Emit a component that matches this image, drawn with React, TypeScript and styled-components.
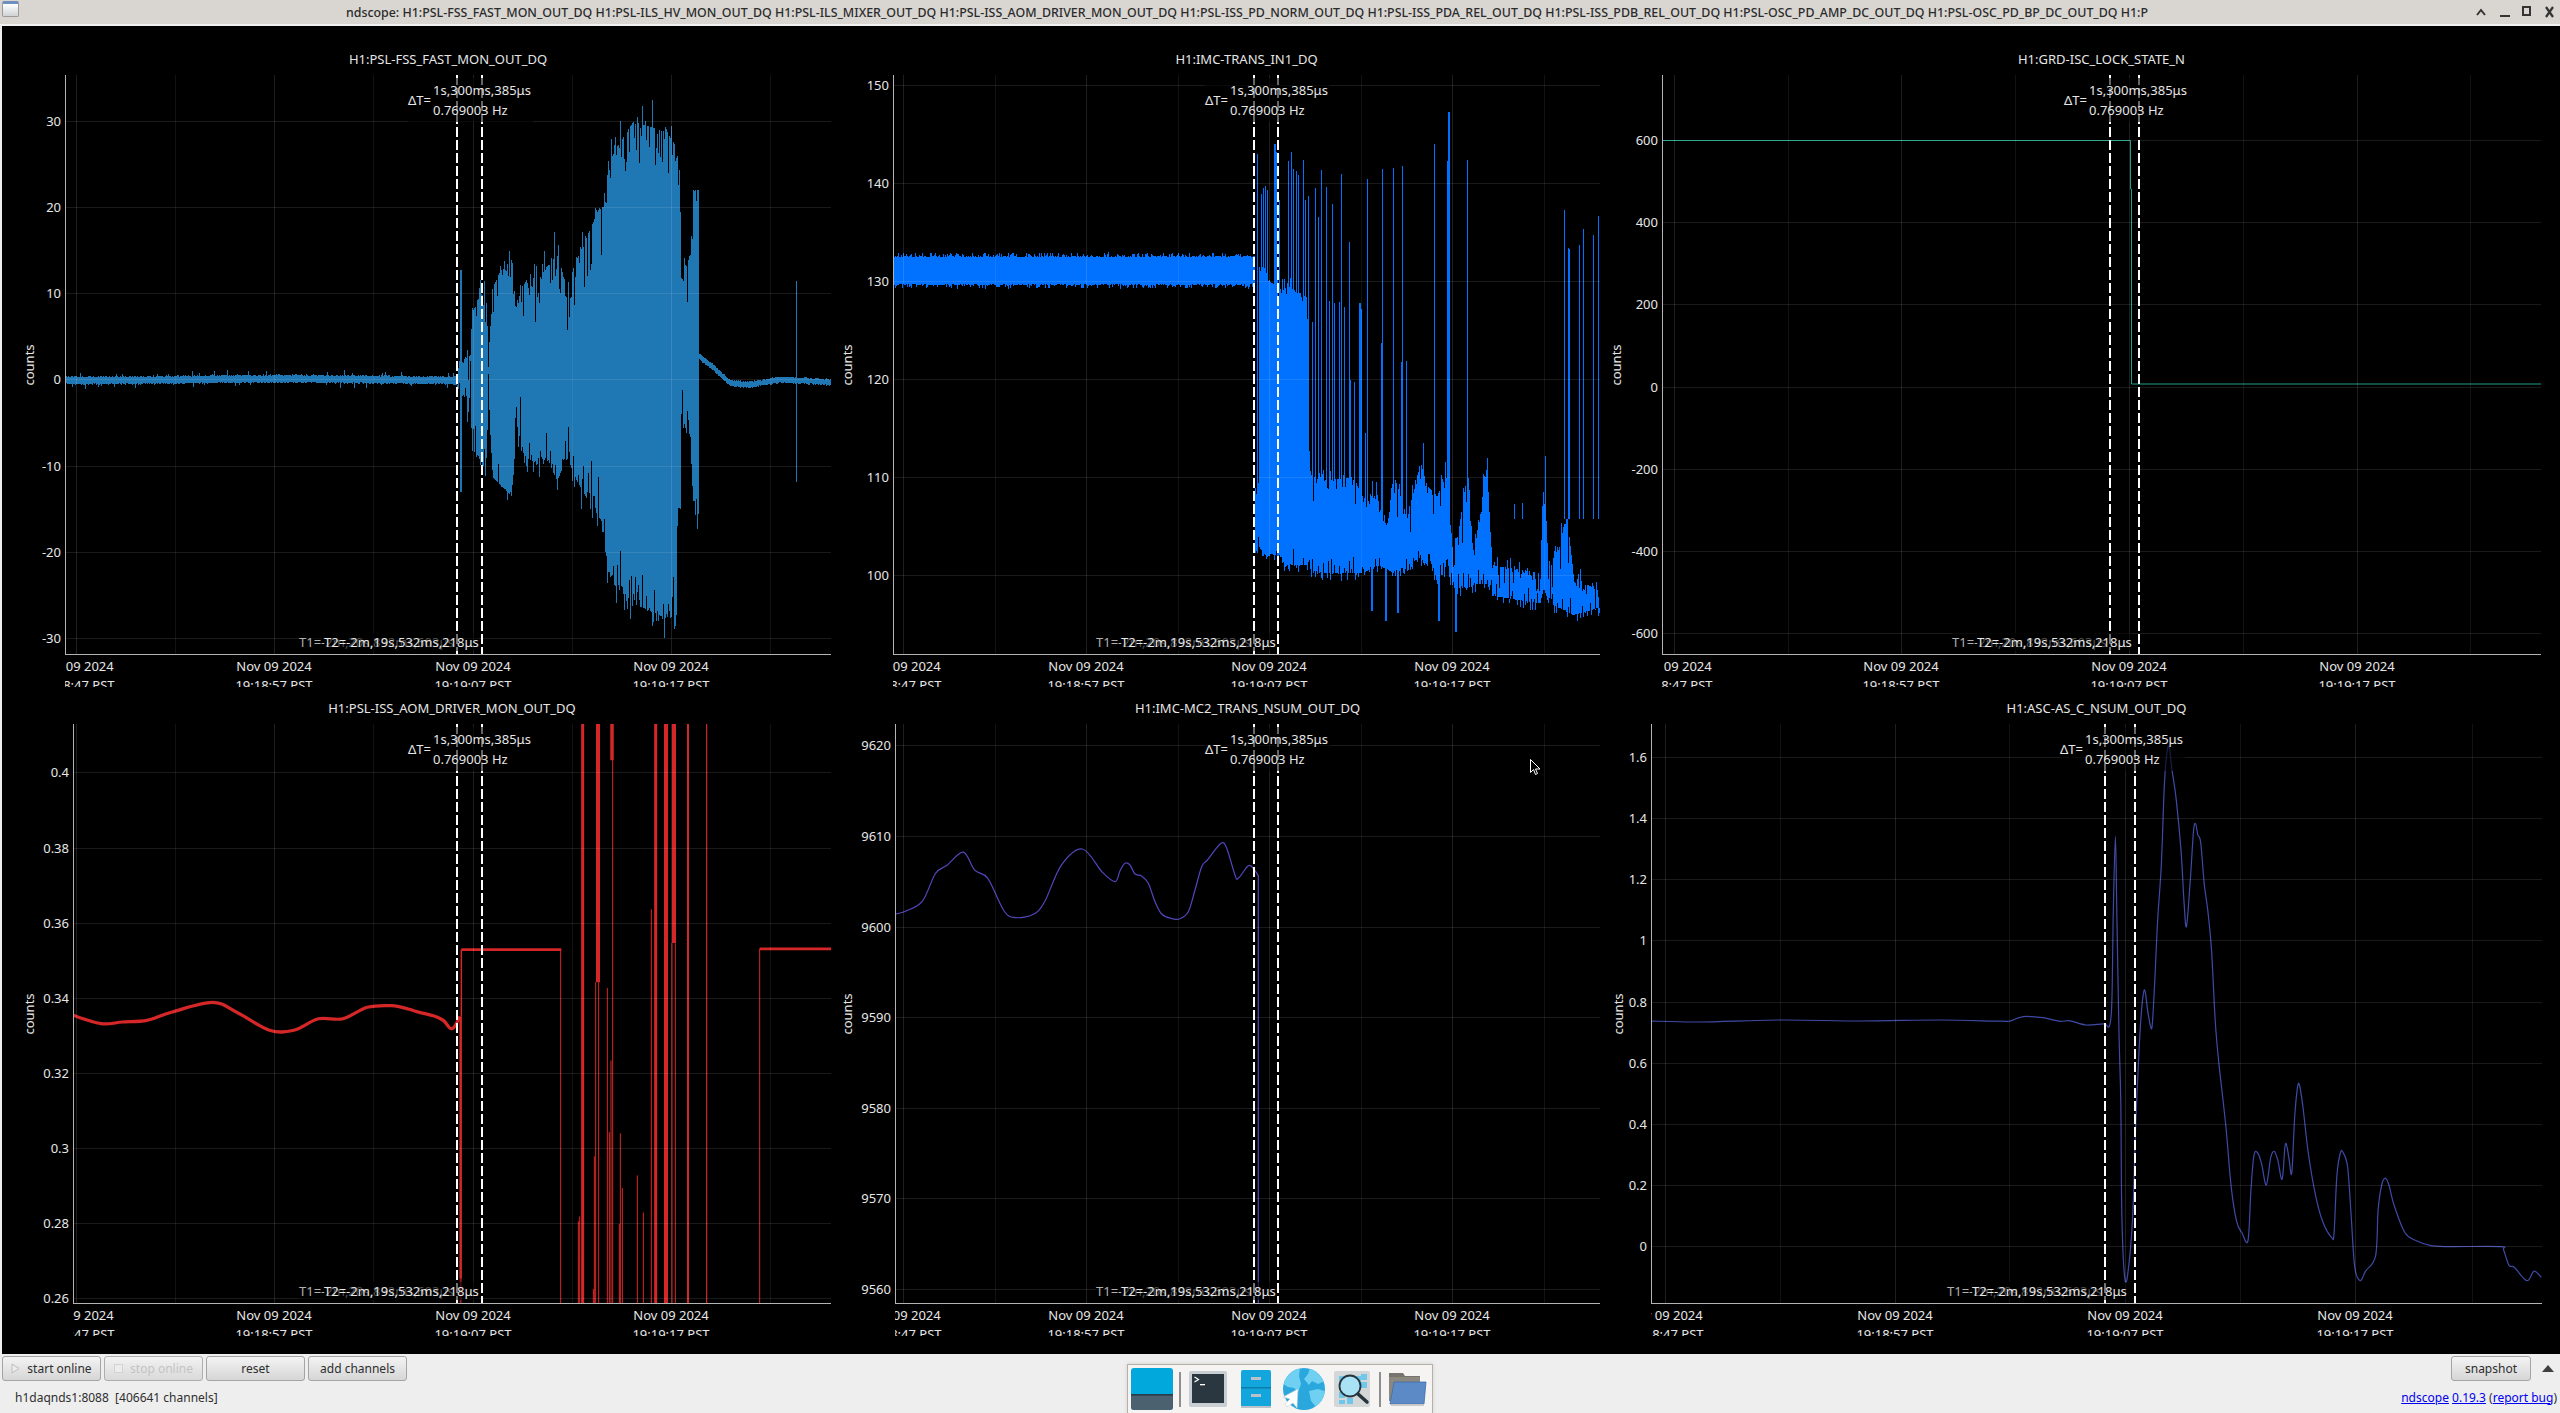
import React, { FC, ReactNode } from "react";
import styled, { createGlobalStyle } from "styled-components";

const GlobalStyle = createGlobalStyle`
  html, body {
    margin: 0;
    padding: 0;
    background: #eeeeee;
    overflow: hidden;
  }
`;

const COL_STARTS = [2, 834, 1604];
const WINDOW_TITLE =
    "ndscope: H1:PSL-FSS_FAST_MON_OUT_DQ H1:PSL-ILS_HV_MON_OUT_DQ H1:PSL-ILS_MIXER_OUT_DQ H1:PSL-ISS_AOM_DRIVER_MON_OUT_DQ H1:PSL-ISS_PD_NORM_OUT_DQ H1:PSL-ISS_PDA_REL_OUT_DQ H1:PSL-ISS_PDB_REL_OUT_DQ H1:PSL-OSC_PD_AMP_DC_OUT_DQ H1:PSL-OSC_PD_BP_DC_OUT_DQ H1:P";

const Page = styled.div`
  width: 2560px;
  height: 1413px;
  display: flex;
  flex-direction: column;
  position: relative;
  overflow: hidden;
  font-family: "Noto Sans", sans-serif;
  background: #eeeeee;
`;

const TitleBar = styled.div`
  height: 24px;
  flex: none;
  position: relative;
  display: flex;
  align-items: center;
  justify-content: center;
  padding-right: 66px;
  background: #d9d6d2;
  border-bottom: 2px solid #f2f2f2;
`;

const TitleText = styled.div`
  font-size: 12.4px;
  font-weight: 500;
  color: #2b2b2b;
  white-space: nowrap;
`;

const WindowIcon = styled.div`
  position: absolute;
  left: 2px;
  top: 1px;
  width: 17px;
  height: 16px;
  border: 1px solid #9a9a9a;
  border-top: 3px solid #6f8fbd;
  border-radius: 2px;
  background: linear-gradient(#ffffff, #cfd2d4);
  box-sizing: border-box;
`;

const WindowControls = styled.svg`
  position: absolute;
  left: 2470px;
  top: 4px;
`;

const PlotGrid = styled.div`
  height: 1328px;
  margin-left: 2px;
  flex: none;
  display: grid;
  grid-template-columns: 832px 770px 956px;
  grid-template-rows: 664px 664px;
  background: #000000;
`;

const Panel = styled.div<{ $gutter: number; $width: number; $head: number; $foot: number }>`
  display: grid;
  grid-template-columns: ${(p) => p.$gutter}px ${(p) => p.$width}px;
  grid-template-rows: ${(p) => p.$head}px 580px ${(p) => p.$foot}px;
  color: #e6e6e6;
  font-size: 13px;
`;

const PlotTitle = styled.div`
  grid-column: 2;
  align-self: end;
  text-align: center;
  line-height: 20px;
  padding-bottom: 6px;
  white-space: nowrap;
`;

const Gutter = styled.div`
  grid-column: 1;
  grid-row: 2;
  position: relative;
`;

const CountsLabel = styled.div<{ $offset: number }>`
  position: absolute;
  right: ${(p) => p.$offset}px;
  top: 50%;
  transform: translate(50%, -50%) rotate(-90deg);
  line-height: 16px;
`;

const YTick = styled.div`
  position: absolute;
  right: 4px;
  line-height: 18px;
  transform: translateY(-50%);
  white-space: nowrap;
`;

const Canvas = styled.div`
  grid-column: 2;
  grid-row: 2;
  position: relative;
  border-left: 1px solid #b4b4b4;
  border-bottom: 1px solid #b4b4b4;
  box-sizing: border-box;
  overflow: hidden;
`;

const PlotSvg = styled.svg`
  display: block;
  position: absolute;
  left: -1px;
  top: 0;
`;

const DeltaLabel = styled.div`
  position: absolute;
  top: 3px;
  display: flex;
  align-items: center;
  gap: 2px;
  background: rgba(0, 0, 0, 0.6);
  padding-right: 2px;
  height: 44px;
  white-space: nowrap;
`;

const DeltaValues = styled.div`
  display: flex;
  flex-direction: column;
  line-height: 20px;
`;

const TimeLabel = styled.div<{ $dim?: boolean }>`
  position: absolute;
  bottom: 3px;
  line-height: 18px;
  height: 18px;
  white-space: nowrap;
  background: rgba(0, 0, 0, 0.55);
  color: ${(p) => (p.$dim ? "#b0b0b0" : "#e6e6e6")};
`;

const XAxis = styled.div`
  grid-column: 2;
  grid-row: 3;
  position: relative;
  height: 32px;
  overflow: hidden;
`;

const XTick = styled.div`
  position: absolute;
  top: 2px;
  transform: translateX(-50%);
  text-align: center;
  line-height: 19px;
  white-space: nowrap;
`;

const Footer = styled.div`
  flex: 1;
  display: flex;
  flex-direction: column;
  background: #eeeeee;
  padding: 2px 2px 0;
`;

const ButtonRow = styled.div`
  display: flex;
  align-items: center;
  gap: 3px;
  height: 25px;
`;

const ToolButton = styled.div<{ $disabled?: boolean; $width?: number }>`
  width: ${(p) => p.$width ?? 99}px;
  height: 25px;
  box-sizing: border-box;
  display: flex;
  align-items: center;
  justify-content: center;
  gap: 7px;
  border: 1px solid #a4a4a4;
  border-radius: 3px;
  background: linear-gradient(#f3f3f3, #d6d6d6);
  font-size: 12px;
  color: ${(p) => (p.$disabled ? "#bcbcbc" : "#2e2e2e")};
  opacity: ${(p) => (p.$disabled ? 0.85 : 1)};
`;

const Spacer = styled.div`
  flex: 1;
`;

const ArrowButton = styled.div`
  width: 0;
  height: 0;
  margin: 0 4px 0 8px;
  border-left: 6px solid transparent;
  border-right: 6px solid transparent;
  border-bottom: 7px solid #404040;
`;

const StatusRow = styled.div`
  display: flex;
  justify-content: space-between;
  align-items: center;
  height: 32px;
  padding: 0 1px 0 13px;
  font-size: 12px;
  color: #2e2e2e;
  white-space: pre;
`;

const Link = styled.span`
  color: #0000ee;
  text-decoration: underline;
`;

const Dock = styled.div`
  position: absolute;
  left: 1127px;
  top: 1364px;
  width: 306px;
  height: 49px;
  box-sizing: border-box;
  border: 1px solid #b6b0a6;
  border-bottom: none;
  background: #f5f4f2;
  box-shadow: 0 0 4px rgba(0, 0, 0, 0.12);
`;

const MouseCursor = styled.svg`
  position: absolute;
  left: 1530px;
  top: 759px;
`;

/* seeded so the noise stays the same between runs */
const makeRandom = (seed: number) => () => {
    seed = (seed + 0x6d2b79f5) | 0;
    let t = Math.imul(seed ^ (seed >>> 15), 1 | seed);
    t = (t + Math.imul(t ^ (t >>> 7), 61 | t)) ^ t;
    return ((t ^ (t >>> 14)) >>> 0) / 4294967296;
};

type Env = number[][];

const interp = (pts: Env, x: number, idx: number) => {
    if (x <= pts[0][0]) return pts[0][idx];
    for (let i = 1; i < pts.length; i++) {
        if (x <= pts[i][0]) {
            const t = (x - pts[i - 1][0]) / (pts[i][0] - pts[i - 1][0]);
            return pts[i - 1][idx] + t * (pts[i][idx] - pts[i - 1][idx]);
        }
    }
    return pts[pts.length - 1][idx];
};

const vline = (x: number, a: number, b: number) => `M${x + 0.5} ${a.toFixed(1)}V${b.toFixed(1)}`;

const buildFastMon = () => {
    const rnd = makeRandom(11);
    const mapPts = (p: number[]) => [400 + p[0] / 3, 60 + p[1] / 2.613, 60 + p[2] / 2.613];
    const burst: Env = [
        [170, 810, 855], [188, 785, 880], [210, 770, 880], [214, 650, 1020], [245, 610, 1050], [256, 600, 1090],
        [265, 770, 870], [275, 600, 1090], [300, 550, 1110], [335, 520, 1140], [345, 640, 1000], [380, 570, 1040],
        [400, 570, 1050], [440, 540, 1040], [470, 510, 1100], [500, 590, 1040], [530, 520, 1100], [555, 470, 1140],
        [600, 380, 1200], [616, 370, 1260], [620, 300, 1330], [640, 240, 1370], [700, 160, 1420], [800, 190, 1460],
        [830, 230, 1450], [833, 320, 1170], [840, 330, 1170], [841, 560, 920], [870, 510, 1000], [878, 340, 1150],
        [896, 340, 1190],
    ].map(mapPts);
    const tail: Env = [
        [897, 775, 0], [940, 805, 0], [990, 845, 0], [1050, 848, 0], [1140, 835, 0], [1293, 842, 0],
    ].map(mapPts);
    let d = "";
    for (let x = 65; x < 831; x++) {
        if (x < 457) {
            const c = 379.5 + Math.sin(x / 60) * 0.8;
            const spike = rnd() < 0.08 ? rnd() * 5 : 0;
            d += vline(x, c - 3 - rnd() * 1.5 - spike, c + 3 + rnd() * 1.5 + (rnd() < 0.06 ? rnd() * 5 : 0));
        } else if (x < 699) {
            const spikeTop = rnd() < 0.35 ? rnd() * rnd() * 34 : 0;
            const cutTop = rnd() < 0.5 ? rnd() * rnd() * 55 : 0;
            const spikeBot = rnd() < 0.35 ? rnd() * rnd() * 30 : 0;
            const cutBot = rnd() < 0.5 ? rnd() * rnd() * 55 : 0;
            d += vline(x, interp(burst, x, 1) - spikeTop + cutTop, interp(burst, x, 2) + spikeBot - cutBot);
        } else {
            const c = interp(tail, x, 1);
            d += vline(x, c - 2.2 - rnd() * 1.5, c + 2.2 + rnd() * 1.5);
        }
    }
    d += vline(460, 270, 492) + vline(461, 270, 492);
    d += vline(796, 281, 482);
    return d;
};

const buildImcTrans = () => {
    const rnd = makeRandom(23);
    const X = (v: number) => 1220 + v / 3;
    const Y = (v: number) => 60 + v / 2.613;
    const base: Env = [
        [105, 1120, 1270], [114, 1120, 1270], [115, 540, 1270], [130, 540, 1290], [145, 560, 1300], [150, 580, 1290],
        [185, 600, 1300], [192, 600, 1320], [200, 590, 1320], [260, 620, 1320], [268, 1080, 1330], [300, 1100, 1340],
        [400, 1090, 1340], [430, 1150, 1340], [470, 1130, 1320], [500, 1220, 1330], [520, 1080, 1340], [560, 1200, 1320],
        [600, 1050, 1300], [620, 1110, 1320], [650, 1140, 1350], [680, 1080, 1340], [700, 1320, 1380], [740, 1080, 1380],
        [760, 1290, 1370], [800, 1060, 1370], [815, 1320, 1400], [960, 1340, 1420], [970, 1050, 1380], [985, 1340, 1420],
        [1040, 1190, 1440], [1060, 1350, 1450], [1140, 1390, 1430],
    ].map((p) => [X(p[0]), Y(p[1]), Y(p[2])]);
    let d = "";
    for (let x = 893; x < 1600; x++) {
        if (x < 1255) {
            d += vline(x, 256 - (rnd() < 0.4 ? rnd() * 4 : 0) + rnd(), 285 + (rnd() < 0.4 ? rnd() * 4 : 0) - rnd());
        } else {
            let top = interp(base, x, 1) + (rnd() < 0.4 ? rnd() * 10 : 0) - (rnd() < 0.25 ? rnd() * 12 : 0);
            if (x > 1310 && x < 1500 && rnd() < 0.08) top -= rnd() * 110;
            if (x > 1300 && rnd() < 0.15) top += rnd() * 35;
            const bot = interp(base, x, 2) + (rnd() < 0.35 ? rnd() * 8 : 0) - (rnd() < 0.3 ? rnd() * 16 : 0);
            d += vline(x, top, bot);
        }
    }
    const up = [
        [112, 245], [122, 350], [128, 335], [135, 330], [141, 340], [162, 220], [168, 240], [176, 365], [205, 265],
        [213, 240], [220, 285], [229, 290], [235, 300], [250, 262], [256, 365], [265, 355], [275, 685], [286, 335],
        [295, 410], [304, 288], [319, 332], [328, 630], [335, 375], [343, 635], [356, 632], [364, 298], [373, 645],
        [388, 475], [391, 835], [418, 635], [423, 650], [442, 310], [485, 285], [482, 740], [520, 282], [545, 277],
        [543, 790], [559, 787], [610, 1000], [643, 220], [683, 135], [680, 265], [742, 262], [800, 1040], [882, 1160],
        [907, 1158], [975, 1035], [1033, 392], [1043, 490], [1048, 495], [1076, 482], [1090, 442], [1120, 457], [1135, 408],
    ];
    up.forEach(([px, top]) => {
        d += vline(Math.round(X(px)), Y(top), Y(1200));
    });
    [[683, 135], [680, 265], [482, 740], [543, 790], [162, 220], [418, 635]].forEach(([px, top]) => {
        d += vline(Math.round(X(px)) + 1, Y(top), Y(1200));
    });
    [[452, 1440], [495, 1465], [530, 1445], [655, 1465], [705, 1495]].forEach(([px, bot]) => {
        d += vline(Math.round(X(px)), Y(1250), Y(bot)) + vline(Math.round(X(px)) + 1, Y(1250), Y(bot));
    });
    return d;
};

const mapAll = (list: number[][], mapX: (v: number) => number, mapY: (v: number) => number) =>
    list.map(([x, y]) => [mapX(x), mapY(y)]);

/* catmull-rom through the traced points, the scope traces are curves and not corners */
const smooth = (pts: number[][]) => {
    let d = `M${pts[0][0].toFixed(1)} ${pts[0][1].toFixed(1)}`;
    for (let i = 0; i < pts.length - 1; i++) {
        const p0 = pts[Math.max(i - 1, 0)];
        const p1 = pts[i];
        const p2 = pts[i + 1];
        const p3 = pts[Math.min(i + 2, pts.length - 1)];
        const c1 = [p1[0] + (p2[0] - p0[0]) / 6, p1[1] + (p2[1] - p0[1]) / 6];
        const c2 = [p2[0] - (p3[0] - p1[0]) / 6, p2[1] - (p3[1] - p1[1]) / 6];
        d += `C${c1[0].toFixed(1)} ${c1[1].toFixed(1)} ${c2[0].toFixed(1)} ${c2[1].toFixed(1)} ${p2[0].toFixed(1)} ${p2[1].toFixed(1)}`;
    }
    return d;
};

const viewScale = 2560 / 1568;
const fromView = (v: number) => v * viewScale;

const AOM_PATH = smooth([
    ...mapAll(
        [
            [45, 622], [62, 627], [75, 626], [90, 625], [105, 620], [130, 614], [145, 620], [165, 631], [180, 631],
            [195, 624], [210, 624], [225, 617], [240, 616], [250, 618],
        ],
        fromView,
        fromView,
    ),
    ...mapAll(
        [[50, 762], [100, 773], [130, 785], [150, 805], [162, 803], [180, 775]],
        (v) => 400 + v / 3,
        (v) => 720 + v / 2.613,
    ),
]);

const AomTrace: FC = () => {
    const X = (v: number) => 400 + v / 3;
    const Y = (v: number) => 720 + v / 2.613;
    const bars = [[548, 3, 1530], [594, 4, 685], [636, 3.5, 105], [767, 3, 1530], [798, 4, 1530], [822, 4, 583], [864, 2, 1530], [920, 1.2, 1530]];
    const thin = [
        [535, 1310], [539, 1297], [547, 1415], [583, 1140], [580, 1487], [587, 685], [596, 685], [622, 700], [628, 1077],
        [633, 890], [638, 105], [658, 1317], [661, 1080], [667, 1223], [712, 1190], [730, 1287], [754, 495], [816, 583], [826, 583],
    ];
    return (
        <g fill="none" stroke="#d62728">
            <path d={AOM_PATH} strokeWidth="3.2" />
            <line x1={X(182)} y1={Y(775)} x2={X(182)} y2={Y(1460)} strokeWidth="2.5" />
            <line x1={X(182)} y1={Y(1460)} x2={X(182)} y2={Y(1530)} strokeWidth="2" stroke="#8a1a1b" />
            <line x1={X(184)} y1={Y(600)} x2={X(184)} y2={Y(775)} strokeWidth="1.5" />
            <line x1={X(184)} y1={Y(600)} x2={X(484)} y2={Y(600)} strokeWidth="2.6" />
            <line x1={X(482)} y1={Y(600)} x2={X(482)} y2={Y(1530)} strokeWidth="1" />
            <line x1={X(1079)} y1={Y(598)} x2={X(1079)} y2={Y(1530)} strokeWidth="1" />
            <line x1={X(1079)} y1={Y(598)} x2={X(1293)} y2={Y(598)} strokeWidth="2.6" />
            {bars.map(([x, w, end]) => (
                <line key={x} x1={X(x)} y1={0} x2={X(x)} y2={Y(end)} strokeWidth={w} />
            ))}
            {thin.map(([x, y]) => (
                <line key={x} x1={X(x)} y1={Y(y)} x2={X(x)} y2={1400} strokeWidth="1" />
            ))}
        </g>
    );
};

const MC2_PATH =
    smooth([
        ...mapAll(
            [
                [548, 560], [555, 558], [565, 552], [573, 535], [580, 530], [590, 522], [597, 533], [605, 538], [615, 558],
                [622, 562], [633, 560], [640, 552], [650, 530], [663, 520], [675, 534], [683, 540],
            ],
            fromView,
            fromView,
        ),
        ...mapAll(
            [
                [0, 452], [15, 430], [30, 435], [45, 462], [65, 468], [85, 490], [105, 545], [125, 582], [155, 596], [180, 596],
                [205, 575], [225, 510], [245, 440], [262, 420], [303, 370], [320, 385], [345, 465], [355, 475], [385, 437],
                [400, 445], [415, 467],
            ],
            (v) => 1120 + v / 3,
            (v) => 720 + v / 3,
        ),
    ]) + "V1400";

const NSUM_PATH = smooth([
    [1651, 1021], [1700, 1022], [1780, 1020], [1860, 1021], [1940, 1020],
    ...mapAll(
        [
            [0, 787], [30, 786], [65, 775], [120, 778], [165, 787], [195, 786], [240, 797], [290, 794], [305, 800], [312, 740],
            [316, 500], [322, 305], [326, 500], [332, 820], [337, 1000], [340, 1300], [349, 1465], [360, 1420], [370, 1300],
            [375, 1170], [379, 1050], [386, 900], [393, 780], [400, 715], [405, 710], [412, 760], [420, 800], [425, 795],
            [432, 680], [440, 520], [450, 380], [458, 180], [465, 90], [472, 70], [480, 130], [492, 210], [505, 340],
            [513, 470], [520, 540], [530, 430], [540, 290], [546, 272], [552, 300], [560, 320], [570, 430], [580, 500],
            [590, 600], [600, 780], [610, 890], [630, 1060], [645, 1220], [660, 1310], [675, 1340], [692, 1360], [700, 1230],
            [708, 1140], [718, 1130], [730, 1160], [743, 1215], [755, 1145], [765, 1127], [775, 1150], [787, 1200], [795, 1115],
            [800, 1112], [807, 1150], [814, 1183], [822, 1040], [830, 960], [836, 955], [845, 1010], [860, 1130], [880, 1240],
            [900, 1310], [925, 1352], [932, 1340], [940, 1190], [950, 1130], [958, 1132], [970, 1170], [980, 1300], [990, 1430],
            [1005, 1465], [1020, 1440], [1048, 1400], [1055, 1280], [1065, 1215], [1075, 1197], [1085, 1215], [1100, 1270],
            [1130, 1340], [1160, 1360], [1200, 1373], [1250, 1376], [1395, 1376], [1405, 1385], [1420, 1425], [1435, 1430],
            [1470, 1465], [1490, 1440], [1510, 1456],
        ],
        (v) => 2000 + v / 2.79,
        (v) => 720 + v / 2.613,
    ),
]);

const FAST_MON_PATH = buildFastMon();
const IMC_TRANS_PATH = buildImcTrans();

interface PlotConfig {
    title: string;
    col: number;
    row: number;
    left: number;
    right: number;
    counts: number;
    deltaX: number;
    yTicks: [string, number][];
    labelX: number[];
    minorX: number[];
    gridY: number[];
    cursors: [number, number];
    trace: ReactNode;
}

const even = (start: number, step: number, n: number) => Array.from({ length: n }, (_, i) => start + i * step);
const ticks = (labels: string[], start: number, step: number): [string, number][] =>
    labels.map((l, i) => [l, start + i * step]);

const PLOTS: PlotConfig[] = [
    {
        title: "H1:PSL-FSS_FAST_MON_OUT_DQ",
        col: 0,
        row: 0,
        left: 65,
        right: 831,
        counts: 36,
        deltaX: -50,
        yTicks: ticks(["30", "20", "10", "0", "-10", "-20", "-30"], 120.5, 86.3),
        gridY: even(120.5, 86.3, 7),
        labelX: [76, 274, 473, 671],
        minorX: [175, 373, 572, 770],
        cursors: [457, 482],
        trace: <path d={FAST_MON_PATH} stroke="#1f77b4" strokeWidth="1" fill="none" shapeRendering="crispEdges" />,
    },
    {
        title: "H1:IMC-TRANS_IN1_DQ",
        col: 1,
        row: 0,
        left: 893,
        right: 1600,
        counts: 46,
        deltaX: -50,
        yTicks: ticks(["150", "140", "130", "120", "110", "100"], 85, 98),
        gridY: even(85, 98, 6),
        labelX: [903, 1086, 1269, 1452],
        minorX: [995, 1178, 1361, 1544],
        cursors: [1254, 1278],
        trace: <path d={IMC_TRANS_PATH} stroke="#0072ff" strokeWidth="1" fill="none" shapeRendering="crispEdges" />,
    },
    {
        title: "H1:GRD-ISC_LOCK_STATE_N",
        col: 2,
        row: 0,
        left: 1662,
        right: 2541,
        counts: 46,
        deltaX: -47,
        yTicks: ticks(["600", "400", "200", "0", "-200", "-400", "-600"], 140, 82.2),
        gridY: even(140, 82.2, 7),
        labelX: [1674, 1901, 2129, 2357],
        minorX: [1788, 2015, 2243, 2470],
        cursors: [2110, 2139],
        trace: (
            <polyline
                points="1662,140.5 2130.5,140.5 2130.5,189 2131.5,189 2131.5,384 2541,384"
                stroke="#1f9e89"
                strokeWidth="1"
                fill="none"
            />
        ),
    },
    {
        title: "H1:PSL-ISS_AOM_DRIVER_MON_OUT_DQ",
        col: 0,
        row: 1,
        left: 73,
        right: 831,
        counts: 44,
        deltaX: -50,
        yTicks: ticks(["0.4", "0.38", "0.36", "0.34", "0.32", "0.3", "0.28", "0.26"], 772.4, 75.1),
        gridY: even(772.4, 75.1, 8),
        labelX: [76, 274, 473, 671],
        minorX: [175, 373, 572, 770],
        cursors: [457, 482],
        trace: <AomTrace />,
    },
    {
        title: "H1:IMC-MC2_TRANS_NSUM_OUT_DQ",
        col: 1,
        row: 1,
        left: 895,
        right: 1600,
        counts: 48,
        deltaX: -50,
        yTicks: ticks(["9620", "9610", "9600", "9590", "9580", "9570", "9560"], 745.3, 90.6),
        gridY: even(745.3, 90.6, 7),
        labelX: [903, 1086, 1269, 1452],
        minorX: [995, 1178, 1361, 1544],
        cursors: [1254, 1278],
        trace: <path d={MC2_PATH} stroke="#5247bd" strokeWidth="1.2" fill="none" />,
    },
    {
        title: "H1:ASC-AS_C_NSUM_OUT_DQ",
        col: 2,
        row: 1,
        left: 1651,
        right: 2542,
        counts: 33,
        deltaX: -46,
        yTicks: ticks(["1.6", "1.4", "1.2", "1", "0.8", "0.6", "0.4", "0.2", "0"], 757, 61.15),
        gridY: even(757, 61.15, 9),
        labelX: [1665, 1895, 2125, 2355],
        minorX: [1780, 2009, 2240, 2472],
        cursors: [2105, 2135],
        trace: <path d={NSUM_PATH} stroke="#3f4aa6" strokeWidth="1.2" fill="none" />,
    },
];

const ROW_LAYOUT = [
    { top: 75, head: 49, foot: 35 },
    { top: 724, head: 34, foot: 50 },
];

const TIMES = ["19:18:47", "19:18:57", "19:19:07", "19:19:17"];

const PlotPanel: FC<{ plot: PlotConfig }> = ({ plot }) => {
    const { top, head, foot } = ROW_LAYOUT[plot.row];
    const width = plot.right - plot.left;
    const [c1] = plot.cursors;
    const rel = (x: number) => x - plot.left;
    return (
        <Panel $gutter={plot.left - COL_STARTS[plot.col]} $width={width} $head={head} $foot={foot}>
            <PlotTitle>{plot.title}</PlotTitle>
            <Gutter>
                <CountsLabel $offset={plot.counts}>counts</CountsLabel>
                {plot.yTicks.map(([label, y]) => (
                    <YTick key={label} style={{ top: y - top }}>
                        {label}
                    </YTick>
                ))}
            </Gutter>
            <Canvas>
                <PlotSvg width={width} height={580}>
                    <g transform={`translate(${-plot.left} ${-top})`}>
                        {plot.trace}
                        {plot.minorX.map((x) => (
                            <line key={x} x1={x + 0.5} x2={x + 0.5} y1={top} y2={top + 580} stroke="#fff" strokeOpacity="0.07" />
                        ))}
                        {plot.labelX.map((x) => (
                            <line key={x} x1={x + 0.5} x2={x + 0.5} y1={top} y2={top + 580} stroke="#fff" strokeOpacity="0.12" />
                        ))}
                        {plot.gridY.map((y) => (
                            <line
                                key={y}
                                x1={plot.left}
                                x2={plot.right}
                                y1={Math.round(y) + 0.5}
                                y2={Math.round(y) + 0.5}
                                stroke="#fff"
                                strokeOpacity="0.1"
                            />
                        ))}
                        {plot.cursors.map((x) => (
                            <line
                                key={x}
                                x1={x}
                                x2={x}
                                y1={top}
                                y2={top + 580}
                                stroke="#fff"
                                strokeWidth="2"
                                strokeDasharray="10 3"
                            />
                        ))}
                    </g>
                </PlotSvg>
                <DeltaLabel style={{ left: rel(c1) + plot.deltaX }}>
                    <span>ΔT=</span>
                    <DeltaValues>
                        <span>1s,300ms,385μs</span>
                        <span>0.769003 Hz</span>
                    </DeltaValues>
                </DeltaLabel>
                <TimeLabel $dim style={{ left: rel(c1) - 159 }}>
                    T1=-2m,20s,832ms,603μs
                </TimeLabel>
                <TimeLabel style={{ left: rel(c1) - 134 }}>T2=-2m,19s,532ms,218μs</TimeLabel>
            </Canvas>
            <XAxis>
                {plot.labelX.map((x, i) => (
                    <XTick key={x} style={{ left: x - plot.left }}>
                        Nov 09 2024
                        <br />
                        {TIMES[i]} PST
                    </XTick>
                ))}
            </XAxis>
        </Panel>
    );
};

const DockIcons: FC = () => (
    <svg width="304" height="48" viewBox="1128 1365 304 48">
        <defs>
            <clipPath id="globeClip">
                <circle cx="1304" cy="1389" r="21" />
            </clipPath>
        </defs>
        <rect x="1131" y="1368" width="42" height="42" rx="3" fill="#00a8dc" />
        <path d="M1131 1395h42v12a3 3 0 0 1-3 3h-36a3 3 0 0 1-3-3z" fill="#4c6170" />
        <rect x="1131" y="1394" width="42" height="1.6" fill="#2a3b47" />
        <rect x="1179" y="1372" width="2" height="35" fill="#8e8e8e" />
        <rect x="1189" y="1371" width="38" height="36" rx="2" fill="#c9ced2" />
        <rect x="1192" y="1374" width="32" height="29" fill="#2b3740" />
        <path d="M1194.5 1377l4 2.500-4 2.500" stroke="#fff" strokeWidth="1.2" fill="none" />
        <rect x="1200" y="1384" width="5" height="1.300" fill="#fff" />
        <rect x="1241" y="1370" width="30" height="38" rx="2" fill="#12a6dd" />
        <rect x="1241" y="1406" width="30" height="2" fill="#b9c3c9" />
        <rect x="1241" y="1387" width="30" height="1.500" fill="#0b7ea9" />
        <rect x="1251" y="1377" width="10" height="3" fill="#b8c2c8" />
        <rect x="1251" y="1394" width="10" height="3" fill="#b8c2c8" />
        <circle cx="1304" cy="1389" r="21" fill="#2aa7dc" />
        <g clipPath="url(#globeClip)" fill="#6fd0f1">
            <path d="M1310 1368c6 0 14 5 17 12l-9 4-6-3-3 4-5-6 4-5z" />
            <path d="M1284 1376c5-5 10-7 16-8l-1 8 2 8-3 8-4-4-6-1-5-3z" />
            <path d="M1309 1391l9-2 9 3-3 10-8 5-5-6z" />
        </g>
        <path d="M1298 1389l-1 19-4-5-6 4-2-3 5-5-7-2z" fill="#ffffff" stroke="#c8ced2" strokeWidth="0.6" />
        <rect x="1334" y="1371" width="36" height="36" rx="2" fill="#d4d7d8" />
        <g fill="#6fc8ec">
            <rect x="1339" y="1376" width="6" height="6" />
            <rect x="1347" y="1376" width="6" height="6" />
            <rect x="1355" y="1376" width="6" height="6" />
            <rect x="1361" y="1374" width="6" height="6" />
            <rect x="1361" y="1382" width="6" height="6" />
            <rect x="1339" y="1384" width="6" height="6" />
            <rect x="1339" y="1392" width="6" height="6" />
            <rect x="1347" y="1398" width="6" height="6" />
            <rect x="1339" y="1400" width="6" height="4" />
        </g>
        <circle cx="1350" cy="1386" r="10.500" fill="#a9e2f5" stroke="#26343c" strokeWidth="1.800" />
        <path d="M1358 1394l9 8" stroke="#26343c" strokeWidth="3.500" strokeLinecap="round" />
        <rect x="1379" y="1372" width="2" height="35" fill="#8e8e8e" />
        <path d="M1389 1373h14l2 3h15v6h-31z" fill="#77736d" />
        <rect x="1389" y="1377" width="31" height="24" fill="#8c8880" />
        <path d="M1394 1382h32l-2 22h-34z" fill="#5b8ac6" stroke="#3f6da8" strokeWidth="0.8" />
        <rect x="1391" y="1404" width="33" height="2" fill="#c9c9c9" />
    </svg>
);

const App: FC = () => (
    <Page>
        <GlobalStyle />
        <TitleBar>
            <WindowIcon />
            <TitleText>{WINDOW_TITLE}</TitleText>
            <WindowControls width="88" height="16" viewBox="0 0 88 16">
                <path d="M7 11l4-5 4 5" stroke="#333" strokeWidth="2" fill="none" />
                <rect x="30" y="11" width="10" height="2" fill="#333" />
                <rect x="53" y="3" width="7" height="8" fill="none" stroke="#333" strokeWidth="2" />
                <path d="M76 3l7 10M83 3l-7 10" stroke="#333" strokeWidth="2.200" fill="none" />
            </WindowControls>
        </TitleBar>
        <PlotGrid>
            {PLOTS.map((plot) => (
                <PlotPanel key={plot.title} plot={plot} />
            ))}
        </PlotGrid>
        <Footer>
            <ButtonRow>
                <ToolButton>
                    <svg width="9" height="11" viewBox="0 0 9 11">
                        <path d="M1 1l7 4.500-7 4.500z" fill="#ececec" stroke="#bdbdbd" />
                    </svg>
                    start online
                </ToolButton>
                <ToolButton $disabled>
                    <svg width="9" height="9" viewBox="0 0 9 9">
                        <rect x="0.500" y="0.500" width="8" height="8" fill="#ececec" stroke="#cfcfcf" />
                    </svg>
                    stop online
                </ToolButton>
                <ToolButton>reset</ToolButton>
                <ToolButton>add channels</ToolButton>
                <Spacer />
                <ToolButton $width={80}>snapshot</ToolButton>
                <ArrowButton />
            </ButtonRow>
            <StatusRow>
                <span>h1daqnds1:8088  [406641 channels]</span>
                <span>
                    <Link>ndscope</Link> <Link>0.19.3</Link> (<Link>report bug</Link>)
                </span>
            </StatusRow>
        </Footer>
        <Dock>
            <DockIcons />
        </Dock>
        <MouseCursor width="11" height="17" viewBox="0 0 11 17">
            <path d="M0.500 0.500v13l3-3 2 5 2-1-2-4.500h4.500z" fill="#000" stroke="#fff" strokeWidth="1" />
        </MouseCursor>
    </Page>
);

export default App;
